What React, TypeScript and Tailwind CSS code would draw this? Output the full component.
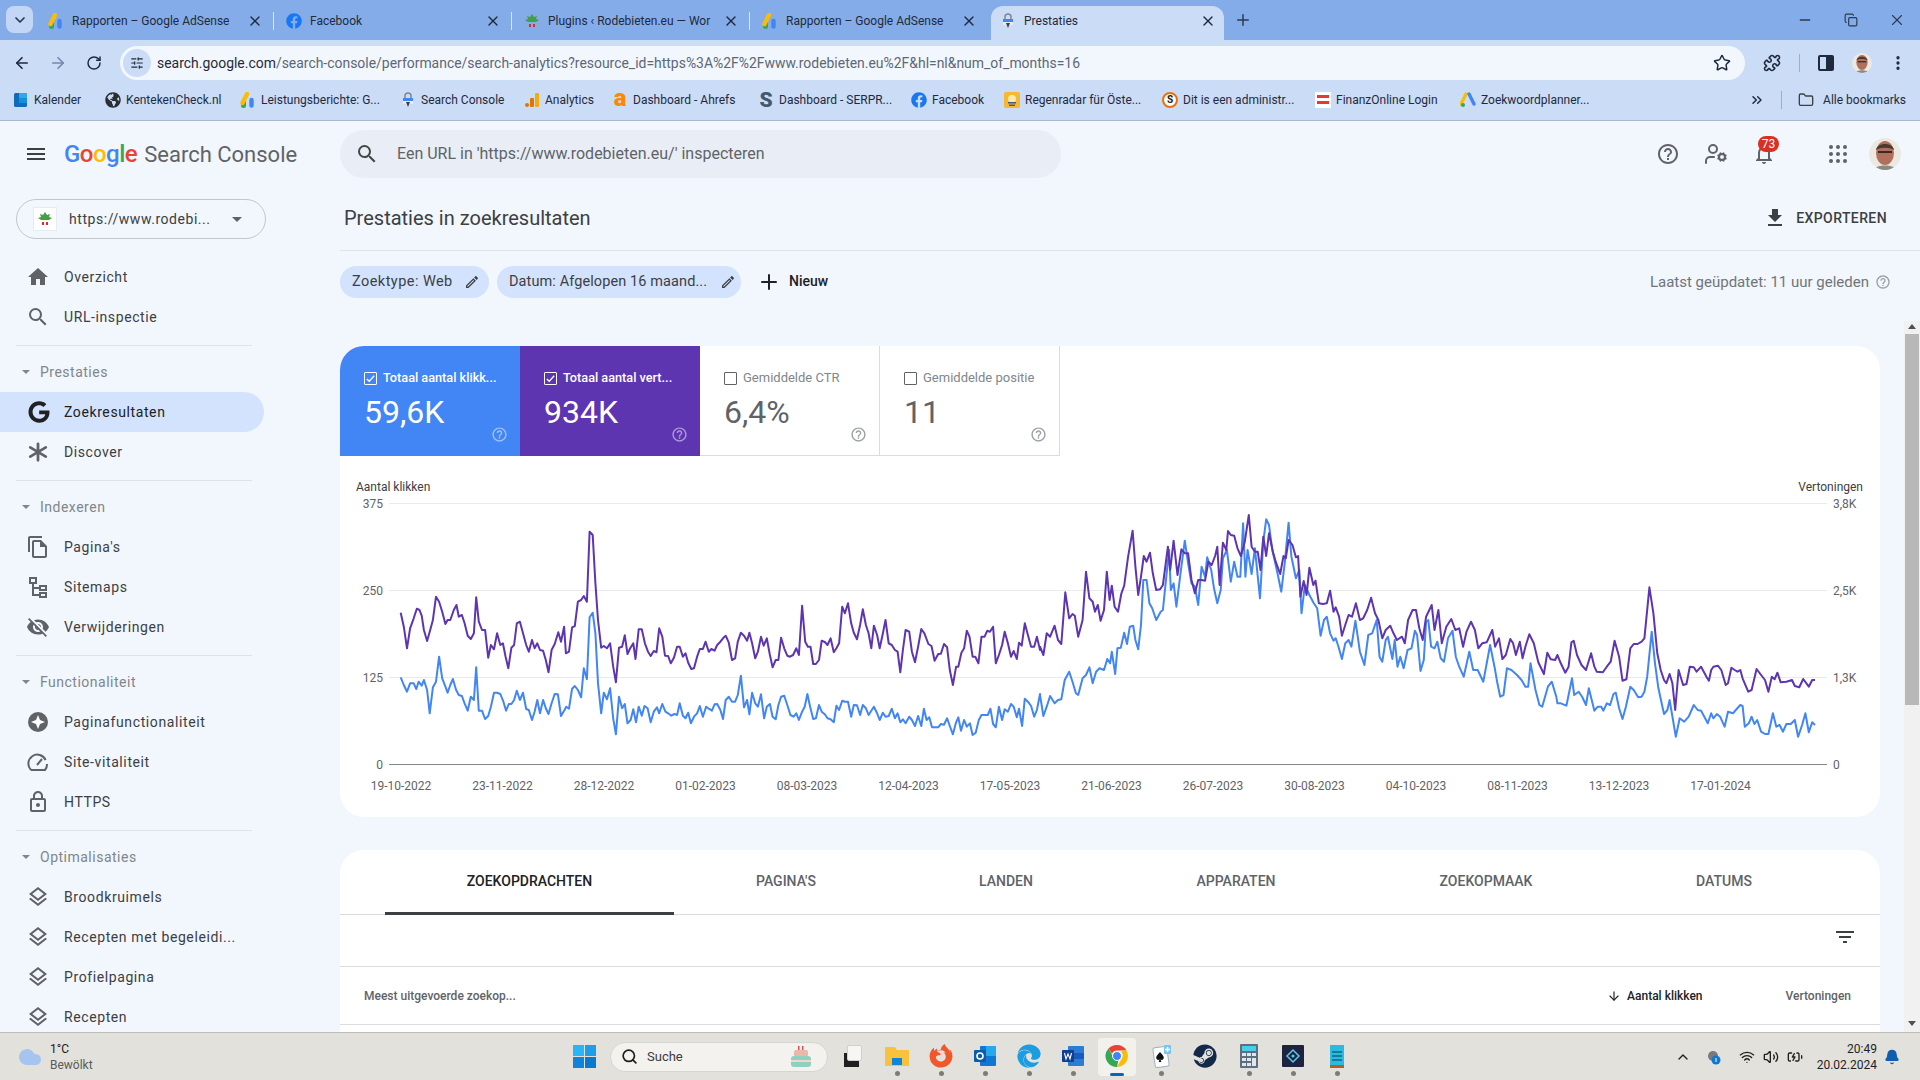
import React from 'react';
import { ArrowLeft, ArrowRight, RotateCw, Star, Puzzle, MoreVertical, SlidersHorizontal, X, Plus, ChevronDown, ChevronUp, Minus, Copy, ChevronsRight, Folder, UserCog, ArrowDown, Search, Wifi, Volume2, BatteryCharging, Bell, Cloud } from 'lucide-react';
import { FaFacebook, FaGoogle, FaFirefoxBrowser, FaEdge, FaSteam, FaGlobeAmericas } from 'react-icons/fa';

const paths = {
  home: 'M10 20v-6h4v6h5v-8h3L12 3 2 12h3v8z',
  search: 'M15.5 14h-.79l-.28-.27A6.471 6.471 0 0 0 16 9.5 6.5 6.5 0 1 0 9.5 16c1.61 0 3.09-.59 4.23-1.57l.27.28v.79l5 4.99L20.49 19l-4.99-5zm-6 0C7.01 14 5 11.99 5 9.5S7.01 5 9.5 5 14 7.01 14 9.5 11.99 14 9.5 14z',
  pages: 'M16 1H4c-1.1 0-2 .9-2 2v14h2V3h12V1zm-1 4H8c-1.1 0-1.99.9-1.99 2L6 21c0 1.1.89 2 1.99 2H19c1.1 0 2-.9 2-2V11l-6-6zM8 21V7h6v5h5v9H8z',
  visOff: 'M12 7c2.76 0 5 2.24 5 5 0 .65-.13 1.26-.36 1.83l2.92 2.92c1.51-1.26 2.7-2.89 3.43-4.75-1.73-4.39-6-7.5-11-7.5-1.4 0-2.74.25-3.98.7l2.16 2.16C10.74 7.13 11.35 7 12 7zM2 4.27l2.28 2.28.46.46C3.08 8.3 1.78 10.02 1 12c1.73 4.39 6 7.5 11 7.5 1.55 0 3.03-.3 4.38-.84l.42.42L19.73 22 21 20.73 3.27 3 2 4.27zM7.53 9.8l1.55 1.55c-.05.21-.08.43-.08.65 0 1.66 1.34 3 3 3 .22 0 .44-.03.65-.08l1.55 1.55c-.67.33-1.41.53-2.2.53-2.76 0-5-2.24-5-5 0-.79.2-1.53.53-2.2zm4.31-.78 3.15 3.15.02-.16c0-1.66-1.34-3-3-3l-.17.01z',
  lock: 'M18 8h-1V6c0-2.76-2.24-5-5-5S7 3.24 7 6v2H6c-1.1 0-2 .9-2 2v10c0 1.1.9 2 2 2h12c1.1 0 2-.9 2-2V10c0-1.1-.9-2-2-2zM9 6c0-1.66 1.34-3 3-3s3 1.34 3 3v2H9V6zm9 14H6V10h12v10zm-6-3c1.1 0 2-.9 2-2s-.9-2-2-2-2 .9-2 2 .9 2 2 2z',
  layers: 'M11.99 18.54l-7.37-5.73L3 14.07l9 7 9-7-1.63-1.27zM12 16l7.36-5.73L21 9l-9-7-9 7 1.63 1.27L12 16zm0-11.47L17.74 9 12 13.47 6.26 9 12 4.53z',
  help: 'M11 18h2v-2h-2v2zm1-16C6.48 2 2 6.48 2 12s4.48 10 10 10 10-4.48 10-10S17.52 2 12 2zm0 18c-4.41 0-8-3.59-8-8s3.59-8 8-8 8 3.59 8 8-3.59 8-8 8zm0-14c-2.21 0-4 1.79-4 4h2c0-1.1.9-2 2-2s2 .9 2 2c0 2-3 1.75-3 5h2c0-2.25 3-2.5 3-5 0-2.21-1.79-4-4-4z',
  bell: 'M12 22c1.1 0 2-.9 2-2h-4c0 1.1.9 2 2 2zm6-6v-5c0-3.07-1.63-5.64-4.5-6.32V4c0-.83-.67-1.5-1.5-1.5s-1.5.67-1.5 1.5v.68C7.64 5.36 6 7.92 6 11v5l-2 2v1h16v-1l-2-2zm-2 1H8v-6c0-2.48 1.51-4.5 4-4.5s4 2.02 4 4.5v6z',
  download: 'M19 9h-4V3H9v6H5l7 7 7-7zM5 18v2h14v-2H5z',
  edit: 'M14.06 9.02l.92.92L5.92 19H5v-.92l9.06-9.06M17.66 3c-.25 0-.51.1-.7.29l-1.83 1.83 3.75 3.75 1.83-1.83c.39-.39.39-1.02 0-1.41l-2.34-2.34c-.2-.2-.45-.29-.71-.29zm-3.6 3.19L3 17.25V21h3.75L17.81 9.94l-3.75-3.75z',
  filter: 'M10 18h4v-2h-4v2zM3 6v2h18V6H3zm3 7h12v-2H6v2z',
  menu: 'M3 18h18v-2H3v2zm0-5h18v-2H3v2zm0-7v2h18V6H3z',
};

const Mi = ({ d, className }: { d: string; className?: string }) => (
  <svg viewBox="0 0 24 24" fill="currentColor" className={className}><path d={d} /></svg>
);

// favicons
const AdSense = () => (
  <svg viewBox="0 0 16 16" className="w-4 h-4 shrink-0">
    <rect x="1" y="8" width="5" height="8" rx="2.5" fill="#34a853" />
    <path d="M2.5 11 L7 2" stroke="#fbbc04" strokeWidth="4.4" strokeLinecap="round" />
    <path d="M11.5 13.5 L11.5 8" stroke="#4285f4" strokeWidth="4.4" strokeLinecap="round" />
  </svg>
);
const Plant = () => (
  <svg viewBox="0 0 16 16" className="w-4 h-4 shrink-0">
    <path d="M8 1l2 3 3-1-1 3 3 1-3 2H4L1 7l3-1-1-3 3 1z" fill="#43a047" />
    <rect x="5" y="11" width="2" height="3" fill="#d32f2f" />
    <rect x="9" y="11" width="2" height="3" fill="#d32f2f" />
  </svg>
);
const ConsoleFav = () => (
  <svg viewBox="0 0 16 16" className="w-4 h-4 shrink-0">
    <path d="M5 6V4a3 3 0 016 0v2" fill="none" stroke="#80868b" strokeWidth="1.5" />
    <rect x="3" y="6" width="10" height="3" fill="#4285f4" />
    <rect x="3" y="9" width="10" height="3" fill="#e8eaed" />
    <path d="M6 10l2 5 2-5z" fill="#3c4043" />
  </svg>
);
const Fb = () => <FaFacebook className="w-4 h-4 shrink-0 text-[#1877f2]" />;

const tabs = [
  { icon: <AdSense />, label: 'Rapporten – Google AdSense', sep: true },
  { icon: <Fb />, label: 'Facebook', sep: true },
  { icon: <Plant />, label: 'Plugins ‹ Rodebieten.eu — Wor', sep: true },
  { icon: <AdSense />, label: 'Rapporten – Google AdSense', sep: false },
];

const bookmarks: { w: string; icon: React.ReactNode; label: string }[] = [
  { w: 'w-[92px]', label: 'Kalender', icon: <svg viewBox="0 0 16 16" className="w-4 h-4 shrink-0"><rect x="1" y="1" width="13" height="14" rx="1.5" fill="#0f6cbd" /><rect x="6" y="1" width="8" height="5" fill="#2fa8e8" /><rect x="6" y="6" width="8" height="5" fill="#1490df" /></svg> },
  { w: 'w-[135px]', label: 'KentekenCheck.nl', icon: <FaGlobeAmericas className="w-4 h-4 shrink-0 text-[#2b2f33]" /> },
  { w: 'w-[160px]', label: 'Leistungsberichte: G...', icon: <AdSense /> },
  { w: 'w-[124px]', label: 'Search Console', icon: <ConsoleFav /> },
  { w: 'w-[88px]', label: 'Analytics', icon: <svg viewBox="0 0 16 16" className="w-4 h-4 shrink-0"><rect x="11" y="1" width="4" height="14" rx="1" fill="#f9ab00" /><rect x="6" y="6" width="4" height="9" rx="1" fill="#e37400" /><circle cx="3" cy="13" r="2" fill="#e37400" /></svg> },
  { w: 'w-[146px]', label: 'Dashboard - Ahrefs', icon: <span className="w-4 h-4 shrink-0 flex items-center justify-center text-[24px] leading-none font-black text-[#ff8800] -mt-1">a</span> },
  { w: 'w-[153px]', label: 'Dashboard - SERPR...', icon: <span className="w-4 h-4 shrink-0 flex items-center justify-center text-[21px] leading-none font-black text-[#44596e]">S</span> },
  { w: 'w-[93px]', label: 'Facebook', icon: <Fb /> },
  { w: 'w-[158px]', label: 'Regenradar für Öste...', icon: <svg viewBox="0 0 16 16" className="w-4 h-4 shrink-0"><rect width="16" height="16" rx="2" fill="#f7b731" /><circle cx="8" cy="7" r="4" fill="#fde9a8" /><rect x="4" y="10" width="8" height="1.5" fill="#4a5a7a" /><rect x="5" y="12.5" width="6" height="1.5" fill="#4a5a7a" /></svg> },
  { w: 'w-[153px]', label: 'Dit is een administr...', icon: <span className="w-4 h-4 shrink-0 rounded-full border-2 border-[#e8710a] bg-white flex items-center justify-center text-[10px] leading-none font-bold text-[#202124]">S</span> },
  { w: 'w-[145px]', label: 'FinanzOnline Login', icon: <svg viewBox="0 0 16 16" className="w-4 h-4 shrink-0"><rect width="16" height="16" fill="#fff" /><rect x="2" y="3" width="12" height="3" fill="#e53935" /><rect x="2" y="9" width="12" height="3" fill="#e53935" /></svg> },
  { w: 'w-[130px]', label: 'Zoekwoordplanner...', icon: <svg viewBox="0 0 16 16" className="w-4 h-4 shrink-0"><path d="M6 2l-5 10" stroke="#fbbc04" strokeWidth="3.4" strokeLinecap="round" /><path d="M9 2l5 10" stroke="#4285f4" strokeWidth="3.4" strokeLinecap="round" /><circle cx="3" cy="13" r="2" fill="#34a853" /></svg> },
];

// sidebar icons that have no single material path handy
const Sitemap = () => (
  <svg viewBox="0 0 24 24" fill="none" stroke="currentColor" strokeWidth="2" className="w-6 h-6">
    <rect x="4" y="3" width="6" height="5" /><rect x="14" y="11" width="6" height="4" /><rect x="14" y="18" width="6" height="4" />
    <path d="M7 8v12h7M7 13h7" />
  </svg>
);
const Spark = () => (
  <svg viewBox="0 0 24 24" className="w-[22px] h-[22px]" stroke="currentColor" strokeWidth="3" strokeLinecap="round"><path d="M12 3v18M3.5 7l17 10M3.5 17l17-10" /></svg>
);
const Experience = () => (
  <svg viewBox="0 0 24 24" className="w-6 h-6"><circle cx="12" cy="12" r="10" fill="currentColor" /><path d="M12 5l2 5 5 2-5 2-2 5-2-5-5-2 5-2z" fill="#fff" /></svg>
);
const Speed = () => (
  <svg viewBox="0 0 24 24" fill="none" stroke="currentColor" strokeWidth="2" className="w-6 h-6"><path d="M5 20a9 9 0 1 1 14.6-10M21 14a9 9 0 0 1-2 6H5" /><path d="M11 15l5-6" /></svg>
);
const LayersIcon = () => <Mi d={paths.layers} className="w-6 h-6" />;

const sections: { title?: string; items: { label: string; icon: React.ReactNode; active?: boolean }[] }[] = [
  { items: [
    { label: 'Overzicht', icon: <Mi d={paths.home} className="w-6 h-6" /> },
    { label: 'URL-inspectie', icon: <Mi d={paths.search} className="w-6 h-6" /> },
  ] },
  { title: 'Prestaties', items: [
    { label: 'Zoekresultaten', active: true, icon: <FaGoogle className="w-[22px] h-[22px] text-[#202124] ml-px" /> },
    { label: 'Discover', icon: <Spark /> },
  ] },
  { title: 'Indexeren', items: [
    { label: "Pagina's", icon: <Mi d={paths.pages} className="w-6 h-6" /> },
    { label: 'Sitemaps', icon: <Sitemap /> },
    { label: 'Verwijderingen', icon: <Mi d={paths.visOff} className="w-6 h-6" /> },
  ] },
  { title: 'Functionaliteit', items: [
    { label: 'Paginafunctionaliteit', icon: <Experience /> },
    { label: 'Site-vitaliteit', icon: <Speed /> },
    { label: 'HTTPS', icon: <Mi d={paths.lock} className="w-6 h-6" /> },
  ] },
  { title: 'Optimalisaties', items: [
    { label: 'Broodkruimels', icon: <LayersIcon /> },
    { label: 'Recepten met begeleidi...', icon: <LayersIcon /> },
    { label: 'Profielpagina', icon: <LayersIcon /> },
    { label: 'Recepten', icon: <LayersIcon /> },
  ] },
];

const Sidebar = () => (
  <aside className="w-[340px] shrink-0 flex flex-col overflow-hidden">
    <div className="h-[65px] shrink-0 flex items-center pl-6">
      <Mi d={paths.menu} className="w-6 h-6 text-[#3c4043]" />
      <div className="ml-4 flex items-baseline whitespace-nowrap">
        <span className="text-[24px] leading-none tracking-[-0.5px] font-medium">
          <span className="text-[#4285f4]">G</span><span className="text-[#ea4335]">o</span><span className="text-[#fbbc04]">o</span><span className="text-[#4285f4]">g</span><span className="text-[#34a853]">l</span><span className="text-[#ea4335]">e</span>
        </span>
        <span className="ml-[7px] text-[22px] leading-none text-[#5f6368]">Search Console</span>
      </div>
    </div>
    <div className="mt-[13px] ml-4 w-[250px] h-10 shrink-0 rounded-full border border-[#c4c7c5] flex items-center pl-4 pr-[23px]">
      <span className="w-6 h-6 bg-white border border-[#e8eaed] flex items-center justify-center shrink-0"><Plant /></span>
      <span className="ml-3 pt-px text-[14px] tracking-[0.55px] text-[#3c4043] whitespace-nowrap">https://www.rodebi...</span>
      <span className="ml-auto w-0 h-0 border-x-[5px] border-x-transparent border-t-[5px] border-t-[#5f6368]" />
    </div>
    <nav className="mt-[18px] flex flex-col">
      {sections.map((s, i) => (
        <div key={i} className="flex flex-col">
          {s.title && (
            <div className="h-10 flex items-center">
              <span className="ml-[22px] w-0 h-0 border-x-[4px] border-x-transparent border-t-[4px] border-t-[#80868b]" />
              <span className="ml-[10px] text-[14px] tracking-[0.5px] text-[#80868b]">{s.title}</span>
            </div>
          )}
          {s.items.map((it) => (
            <div key={it.label + i} className={`h-10 w-[264px] shrink-0 flex items-center pl-[26px] gap-[14px] rounded-r-full ${it.active ? 'bg-[#d3e3fd]' : ''}`}>
              <span className={`w-6 h-6 flex items-center justify-center ${it.active ? 'text-[#202124]' : 'text-[#5f6368]'}`}>{it.icon}</span>
              <span className={`text-[14px] tracking-[0.6px] whitespace-nowrap ${it.active ? 'text-[#202124]' : 'text-[#3c4043]'}`}>{it.label}</span>
            </div>
          ))}
          {i < sections.length - 1 && <div className="mt-2 mb-[6px] ml-4 w-[236px] h-px bg-[#dfe3e8]" />}
        </div>
      ))}
    </nav>
  </aside>
);

const stats = [
  { label: 'Totaal aantal klikk...', value: '59,6K', bg: 'bg-[#4285f4]', on: true },
  { label: 'Totaal aantal vert...', value: '934K', bg: 'bg-[#5e35b1]', on: true },
  { label: 'Gemiddelde CTR', value: '6,4%', bg: 'bg-white', on: false },
  { label: 'Gemiddelde positie', value: '11', bg: 'bg-white', on: false },
];

const StatCard = ({ label, value, bg, on }: { label: string; value: string; bg: string; on: boolean }) => (
  <div className={`w-[180px] h-[110px] flex flex-col pl-6 pr-[12px] pt-[25px] ${bg} ${on ? 'text-white' : 'text-[#80868b] border-r border-b border-[#dadce0]'}`}>
    <div className="flex items-center h-[14px]">
      <span className={`w-[13px] h-[13px] border rounded-[1px] flex items-center justify-center shrink-0 ${on ? 'border-white' : 'border-[#5f6368]'}`}>
        {on && <svg viewBox="0 0 12 12" className="w-[11px] h-[11px]"><path d="M2 6.5l2.6 2.6L10 3" fill="none" stroke="#fff" strokeWidth="1.5" /></svg>}
      </span>
      <span className={`ml-[6px] whitespace-nowrap ${on ? 'text-[12.7px] font-medium' : 'text-[13px]'}`}>{label}</span>
    </div>
    <div className={`mt-[11px] text-[32px] leading-[32px] ${on ? '' : 'text-[#5f6368]'}`}>{value}</div>
    <Mi d={paths.help} className={`w-[17px] h-[17px] self-end -mt-[2px] ${on ? 'text-white/50' : 'text-[#9aa0a6]'}`} />
  </div>
);

// series read off the reference, in two runs with their own x factor
const z6p = [136,428,143,470,150,535,157,475,165,445,172,416,178,420,183,437,188,480,195,513,202,480,208,450,215,380,222,395,229,425,236,462,241,450,247,450,255,420,261,405,266,440,273,435,279,460,286,497,293,507,300,490,305,382,311,455,318,480,325,480,332,563,338,525,345,538,352,490,359,525,365,520,371,560,377,595,384,533,390,525,396,460,403,455,410,490,417,525,423,545,430,510,436,535,442,520,448,540,455,542,461,570,467,607,474,540,481,522,489,487,495,515,502,470,506,550,513,545,520,472,526,468,533,395,540,390,546,378,553,395,559,185,566,195,572,340,578,450,585,533,591,528,598,535,605,520,612,590,618,637,625,533,632,530,638,496,644,552,650,535,657,520,662,567,669,478,676,478,683,520,690,545,696,558,703,543,709,547,715,475,722,500,728,557,735,558,741,580,748,563,755,530,761,530,768,560,774,550,780,578,787,597,793,595,800,560,806,537,813,537,819,515,826,545,832,537,839,542,845,525,852,515,858,505,864,497,871,518,878,570,885,565,891,515,898,488,905,497,912,512,917,488,923,520,930,565,936,545,943,500,949,527,956,505,963,555,969,592,976,570,982,570,988,503,995,535,1002,557,1008,560,1015,555,1022,535,1028,555,1035,407,1042,515,1048,530,1054,530,1060,582,1066,582,1073,570,1079,512,1086,516,1092,525,1099,505,1106,547,1112,535,1118,520,1125,410,1131,430,1138,400,1145,460,1151,488,1158,508,1165,465,1171,418,1178,465,1184,490,1190,535,1196,467,1203,495,1209,535,1216,490,1222,450,1229,520,1236,525,1243,540,1249,545,1255,607,1261,540,1267,480,1275,485,1281,545,1288,577,1295,530,1302,477,1309,490,1318,522,1325,528,1332,572,1340,552,1346,551,1353,522,1360,532,1366,600,1373,645,1380,590,1385,590,1392,548,1398,535,1404,482,1410,500,1417,560,1423,560,1430,580,1437,500,1444,500,1450,482,1456,485,1463,470,1469,580,1476,555,1483,525,1489,485,1496,520,1503,560,1509,543,1516,567,1521,518,1527,527,1534,460,1541,495,1548,530,1555,530,1561,500,1568,540];
const z7p = [0,530,6,555,12,490,18,500,26,467,32,510,38,522,45,367,52,445,58,432,62,437,68,500,76,450,82,305,88,385,94,395,98,425,103,405,108,452,114,420,119,305,124,390,128,347,133,410,139,425,145,370,150,347,157,260,165,182,170,290,175,375,180,320,185,258,190,275,196,248,201,310,207,360,214,358,219,345,228,230,232,300,238,212,245,315,252,238,258,250,264,250,270,330,276,370,282,330,288,330,294,332,300,275,306,285,312,258,316,230,320,345,326,218,332,240,335,183,340,195,346,197,352,235,358,258,365,215,372,135,377,230,383,245,388,245,393,300,398,200,403,258,408,190,415,245,420,275,428,312,434,258,438,265,443,210,450,225,456,262,460,258,464,380,470,333,475,375,480,293,487,345,491,332,497,400,504,402,511,400,517,362,523,425,527,412,533,440,538,497,545,460,550,435,556,440,563,400,570,450,576,445,583,420,590,383,597,430,603,450,610,505,616,480,624,467,630,490,636,510,645,500,650,520,656,450,664,420,670,420,676,475,682,510,688,440,698,405,703,480,710,420,716,520,724,470,733,447,740,480,747,475,754,530,760,485,768,455,775,480,781,535,788,520,796,517,806,480,811,530,818,505,824,567,830,555,838,507,843,520,848,555,855,515,860,565,865,530,872,493,880,520,888,577,898,612,904,548,910,568,918,570,922,555,928,580,936,608,942,590,947,517,951,512,957,555,965,585,973,600,982,550,988,590,992,605,1003,607,1010,590,1017,575,1024,512,1032,560,1038,632,1045,628,1052,535,1058,522,1065,522,1072,515,1077,505,1086,352,1093,430,1100,550,1106,600,1112,630,1116,640,1122,612,1127,640,1132,720,1138,600,1146,645,1152,642,1158,590,1165,592,1170,605,1178,590,1188,622,1192,632,1196,600,1200,590,1208,587,1214,600,1222,645,1226,640,1232,593,1238,600,1243,605,1248,600,1252,625,1262,665,1268,660,1277,597,1285,615,1292,630,1298,665,1304,620,1309,628,1314,608,1320,637,1330,635,1340,630,1345,648,1353,652,1360,627,1370,650,1376,630,1381,630];
const z6b = [136,622,143,645,150,665,157,640,165,640,171,657,176,635,183,647,188,630,195,660,201,730,208,652,215,635,222,560,229,625,236,650,241,668,247,645,253,627,260,660,266,675,273,678,279,700,286,722,293,680,300,690,305,592,311,722,318,722,325,747,332,738,338,710,345,668,352,668,359,672,366,695,372,722,378,702,384,702,390,690,396,662,403,690,410,668,417,717,423,720,430,750,436,725,442,690,448,730,455,690,461,715,467,732,474,700,481,672,488,673,495,738,502,722,507,710,513,716,520,656,526,648,533,660,540,682,546,595,553,628,559,442,566,428,572,490,578,640,585,730,591,668,598,688,605,655,612,745,618,793,625,680,632,715,638,702,644,760,651,750,657,718,663,757,669,710,676,737,682,708,689,715,696,757,703,725,710,712,715,730,722,702,729,725,735,730,742,737,749,732,755,735,761,700,768,737,774,745,780,728,786,760,793,740,800,730,806,708,813,740,820,710,826,716,833,722,839,703,845,702,852,720,858,747,864,690,871,680,878,695,885,695,891,675,898,617,905,712,912,690,917,733,923,668,930,700,936,710,943,673,950,745,956,710,963,702,969,740,976,748,982,705,988,680,995,677,1002,705,1009,735,1016,740,1022,730,1028,750,1035,725,1041,710,1047,672,1053,710,1060,747,1066,745,1073,705,1079,725,1086,733,1092,745,1099,748,1106,757,1112,707,1118,720,1125,692,1131,695,1138,695,1145,740,1151,705,1158,706,1165,735,1171,705,1178,715,1184,735,1190,722,1196,710,1203,730,1209,750,1216,728,1222,740,1229,738,1236,716,1243,745,1249,730,1255,757,1261,748,1267,760,1275,740,1281,750,1288,768,1295,738,1302,768,1308,716,1314,750,1320,742,1326,772,1333,772,1340,772,1346,762,1353,764,1360,745,1366,768,1373,793,1380,757,1385,742,1391,782,1398,750,1404,770,1411,760,1417,795,1424,788,1431,750,1437,735,1444,735,1451,735,1457,716,1463,762,1469,772,1476,710,1483,750,1489,718,1496,725,1503,702,1509,710,1516,742,1521,716,1528,768,1534,686,1541,695,1548,708,1555,740,1561,720,1568,672];
const z7b = [0,675,6,738,12,710,18,678,26,700,32,690,38,688,44,630,52,605,58,635,64,670,68,675,76,625,82,615,88,592,94,640,100,605,106,595,114,600,120,567,125,580,128,545,134,612,138,535,144,533,150,488,155,522,160,470,166,467,170,510,175,538,180,465,184,330,190,330,195,400,200,415,207,450,215,425,219,420,225,320,230,240,233,360,238,340,243,410,250,315,258,212,264,280,270,340,276,350,282,405,288,290,294,320,298,262,305,300,310,355,316,400,322,360,326,265,333,240,340,335,346,275,352,320,357,320,362,160,366,320,370,240,377,312,383,235,392,385,398,215,403,148,408,165,414,240,422,300,430,365,436,280,443,158,448,260,456,325,462,300,466,430,472,345,480,375,488,400,494,415,500,497,506,450,511,440,517,490,523,512,527,505,532,530,538,567,544,520,550,510,555,530,562,452,570,545,578,585,585,495,592,490,600,450,605,560,610,575,616,510,620,500,628,567,632,510,637,590,642,560,648,595,655,540,662,535,668,482,672,495,678,603,684,570,688,455,692,450,697,530,703,535,708,515,714,565,720,575,727,505,735,482,741,560,747,590,755,620,765,545,772,600,780,600,790,635,802,525,810,590,815,640,820,680,826,675,832,595,840,600,850,615,858,630,865,650,870,650,874,580,883,660,890,705,895,710,905,650,912,635,920,680,922,700,928,700,938,707,948,625,952,675,960,665,966,680,973,705,978,655,988,722,994,710,1000,710,1004,722,1010,700,1016,705,1022,672,1026,668,1032,715,1038,747,1044,710,1052,650,1058,660,1066,682,1072,680,1077,665,1082,620,1090,485,1096,580,1102,655,1112,732,1118,720,1122,690,1128,750,1133,800,1140,745,1148,755,1156,740,1165,705,1172,720,1178,722,1190,760,1196,730,1200,745,1206,732,1212,740,1220,770,1226,725,1235,730,1240,720,1248,705,1252,708,1256,770,1263,760,1268,740,1273,762,1278,750,1285,785,1292,792,1298,792,1306,730,1312,770,1318,765,1324,785,1330,762,1338,762,1345,750,1351,800,1358,765,1364,730,1370,787,1376,757,1381,765];

const toPoints = (a: number[], x0: number, fx: number) => {
  const out: string[] = [];
  for (let i = 0; i < a.length; i += 2) out.push(`${(x0 + a[i] / fx).toFixed(1)},${(470 + a[i + 1] / 3).toFixed(1)}`);
  return out.join(' ');
};
const seriesPoints = (a: number[], b: number[]) => toPoints(a, 340, 2.24) + ' ' + toPoints(b, 1040, 1.782);

const dates = ['19-10-2022','23-11-2022','28-12-2022','01-02-2023','08-03-2023','12-04-2023','17-05-2023','21-06-2023','26-07-2023','30-08-2023','04-10-2023','08-11-2023','13-12-2023','17-01-2024'];
const grid = [{ y: 503, l: '375', r: '3,8K' }, { y: 590, l: '250', r: '2,5K' }, { y: 677, l: '125', r: '1,3K' }, { y: 764, l: '0', r: '0' }];

const Chart = () => (
  <svg viewBox="340 456 1540 361" className="block w-[1540px] h-[361px]" fontFamily="Roboto, sans-serif" fontSize="12">
    <text x="356" y="491" fill="#3c4043">Aantal klikken</text>
    <text x="1863" y="491" fill="#3c4043" textAnchor="end">Vertoningen</text>
    {grid.map((g) => (
      <g key={g.y}>
        <line x1="389" x2="1827" y1={g.y + 0.5} y2={g.y + 0.5} stroke={g.l === '0' ? '#80868b' : '#e8eaed'} />
        <text x="383" y={g.y + 5} textAnchor="end" fill="#5f6368">{g.l}</text>
        <text x="1833" y={g.y + 5} fill="#5f6368">{g.r}</text>
      </g>
    ))}
    {dates.map((d, i) => (
      <text key={d} x={401 + i * 101.5} y="790" textAnchor="middle" fill="#5f6368">{d}</text>
    ))}
    <polyline points={seriesPoints(z6b, z7b)} fill="none" stroke="#4285f4" strokeWidth="2" strokeLinejoin="round" />
    <polyline points={seriesPoints(z6p, z7p)} fill="none" stroke="#5e35b1" strokeWidth="2" strokeLinejoin="round" />
  </svg>
);

const tableTabs = [
  { label: 'ZOEKOPDRACHTEN', w: 'w-[289px]', on: true },
  { label: "PAGINA'S", w: 'w-[224px]' },
  { label: 'LANDEN', w: 'w-[216px]' },
  { label: 'APPARATEN', w: 'w-[244px]' },
  { label: 'ZOEKOPMAAK', w: 'w-[256px]' },
  { label: 'DATUMS', w: 'w-[220px]' },
];

const Avatar = ({ size, className = '' }: { size: string; className?: string }) => (
  <svg viewBox="0 0 32 32" className={`${size} rounded-full shrink-0 ${className}`}>
    <rect width="32" height="32" fill="#ece8e2" />
    <ellipse cx="16" cy="15" rx="9" ry="12" fill="#b0705c" />
    <path d="M7 12c1-8 17-8 18 0-4-3-14-3-18 0z" fill="#4a3a30" />
    <rect x="9" y="13" width="14" height="2" fill="#3a2a25" />
    <path d="M4 32c2-6 22-6 24 0z" fill="#8a8a80" />
  </svg>
);

const Main = () => (
  <main className="relative flex-1 min-w-0 flex flex-col overflow-hidden">
    <div className="h-[65px] shrink-0 flex items-center">
      <div className="w-[721px] h-12 rounded-full bg-[#e9eef6] flex items-center pl-[15px] text-[#444746]">
        <Mi d={paths.search} className="w-6 h-6" />
        <span className="ml-[18px] text-[16px] text-[#5f6368]">Een URL in 'https://www.rodebieten.eu/' inspecteren</span>
      </div>
      <div className="ml-auto pr-[19px] flex items-center text-[#5f6368]">
        <span className="w-12 h-12 flex items-center justify-center"><Mi d={paths.help} className="w-6 h-6" /></span>
        <span className="w-12 h-12 flex items-center justify-center"><UserCog className="w-6 h-6" strokeWidth={2} /></span>
        <span className="relative w-12 h-12 flex items-center justify-center">
          <Mi d={paths.bell} className="w-6 h-6" />
          <span className="absolute left-[18px] top-[6px] w-[21px] h-4 rounded-full bg-[#d93025] text-white text-[12px] leading-4 text-center">73</span>
        </span>
        <span className="ml-[26px] w-12 h-12 flex items-center justify-center">
          <svg viewBox="0 0 24 24" className="w-6 h-6" fill="currentColor">
            {[5, 12, 19].flatMap((y) => [5, 12, 19].map((x) => <circle key={`${x}-${y}`} cx={x} cy={y} r="2" />))}
          </svg>
        </span>
        <Avatar size="w-8 h-8" className="ml-[7px]" />
      </div>
    </div>

    <div className="h-[65px] shrink-0 flex items-center justify-between border-b border-[#dfe3e8] pl-1 pr-[33px]">
      <h1 className="text-[20px] text-[#3c4043]">Prestaties in zoekresultaten</h1>
      <div className="flex items-center gap-[9px] text-[#3c4043]">
        <Mi d={paths.download} className="w-6 h-6" />
        <span className="text-[14px] font-medium tracking-[0.4px]">EXPORTEREN</span>
      </div>
    </div>

    <div className="h-[95px] shrink-0 flex items-start pt-[15px] pr-[29px]">
      <div className="w-[149px] h-8 rounded-full bg-[#d3e3fd] flex items-center justify-between pl-3 pr-[9px] text-[14.5px] tracking-[0.45px] text-[#3c4043]">
        <span>Zoektype: Web</span>
        <Mi d={paths.edit} className="w-4 h-4" />
      </div>
      <div className="ml-2 w-[244px] h-8 rounded-full bg-[#d3e3fd] flex items-center justify-between pl-3 pr-[5px] text-[14.5px] tracking-[0.1px] text-[#3c4043]">
        <span className="whitespace-nowrap">Datum: Afgelopen 16 maand...</span>
        <Mi d={paths.edit} className="w-4 h-4" />
      </div>
      <div className="ml-4 h-8 flex items-center gap-2 text-[14px] font-medium text-[#202124]">
        <Plus className="w-6 h-6" strokeWidth={2} />
        <span className="-mt-[2px]">Nieuw</span>
      </div>
      <div className="ml-auto h-8 flex items-center gap-[6px] text-[15px] text-[#70757a]">
        <span>Laatst geüpdatet: 11 uur geleden</span>
        <Mi d={paths.help} className="w-4 h-4 text-[#9aa0a6]" />
      </div>
    </div>

    <section className="mr-10 h-[471px] shrink-0 bg-white rounded-3xl overflow-hidden">
      <div className="flex">
        {stats.map((s) => <StatCard key={s.label} {...s} />)}
      </div>
      <Chart />
    </section>

    <section className="mt-[33px] mr-10 flex-1 min-h-0 bg-white rounded-t-3xl flex flex-col">
      <div className="h-[65px] shrink-0 flex pl-[45px] border-b border-[#dadce0]">
        {tableTabs.map((t) => (
          <div key={t.label} className={`${t.w} h-[65px] flex items-center justify-center text-[14px] font-medium ${t.on ? 'text-[#202124] border-b-[3px] border-[#3c4043]' : 'text-[#5f6368] pb-[3px]'}`}>{t.label}</div>
        ))}
      </div>
      <div className="h-[52px] shrink-0 flex justify-end items-start pt-[10px] pr-[23px] border-b border-[#dadce0]">
        <Mi d={paths.filter} className="w-6 h-6 text-[#3c4043]" />
      </div>
      <div className="h-[58px] shrink-0 flex items-center pl-6 pr-[29px] border-b border-[#dadce0] text-[12px] font-medium">
        <span className="text-[#5f6368]">Meest uitgevoerde zoekop...</span>
        <ArrowDown className="ml-auto w-[14px] h-[14px] text-[#202124]" />
        <span className="ml-[6px] text-[#202124]">Aantal klikken</span>
        <span className="ml-[83px] text-[#5f6368]">Vertoningen</span>
      </div>
    </section>

    <div className="absolute right-0 top-[200px] bottom-0 w-4 bg-[#f1f1f1] flex flex-col items-center">
      <span className="mt-[3px] w-0 h-0 border-x-[4px] border-x-transparent border-b-[5px] border-b-[#505050]" />
      <span className="mt-[5px] w-[14px] h-[371px] bg-[#b8b8b8]" />
      <span className="mt-auto mb-[6px] w-0 h-0 border-x-[4px] border-x-transparent border-t-[5px] border-t-[#505050]" />
    </div>
  </main>
);

const Slot = ({ children, dot, active }: { children: React.ReactNode; dot?: boolean; active?: boolean }) => (
  <div className="relative w-11 h-12 flex items-center justify-center">
    {active && <span className="absolute left-[3px] top-[5px] w-[38px] h-[38px] rounded bg-[#f2f1ec]" />}
    <span className="relative w-6 h-6 flex items-center justify-center -mt-[1px]">{children}</span>
    {dot && <span className="absolute left-[20px] bottom-[5px] w-[5px] h-[5px] rounded-full bg-[#7c7c78]" />}
    {active && <span className="absolute left-[15px] bottom-[5px] w-[14px] h-[3px] rounded-full bg-[#0067c0]" />}
  </div>
);

const Taskbar = () => (
  <footer className="h-12 shrink-0 flex items-center bg-[#e2e1dc] border-t border-[#bdbdb8]">
    <div className="w-[573px] shrink-0 flex items-center pl-[18px]">
      <Cloud className="w-6 h-6 text-[#a6c5ee]" fill="#a6c5ee" />
      <div className="ml-2 flex flex-col text-[12px] leading-[16px]">
        <span className="text-[#202020]">1°C</span>
        <span className="text-[#5a5a5a]">Bewölkt</span>
      </div>
    </div>
    <svg viewBox="0 0 23 23" className="w-[23px] h-[23px] shrink-0">
      <rect width="11" height="11" fill="#29b6f6" /><rect x="12" width="11" height="11" fill="#1e9de8" /><rect y="12" width="11" height="11" fill="#0f85d9" /><rect x="12" y="12" width="11" height="11" fill="#0a78cc" />
    </svg>
    <div className="ml-[14px] w-[218px] h-[30px] rounded-full bg-[#f3f2ee] border border-[#d6d5cf] flex items-center pl-[10px] pr-[12px]">
      <Search className="w-[17px] h-[17px] text-[#1f1f1f]" strokeWidth={2.4} />
      <span className="ml-[9px] text-[13px] text-[#3c3c3c]">Suche</span>
      <svg viewBox="0 0 28 28" className="ml-auto w-7 h-7">
        <rect x="11" y="3" width="1.5" height="5" fill="#d9534f" /><rect x="15" y="3" width="1.5" height="5" fill="#d9534f" />
        <rect x="7" y="7" width="14" height="7" rx="2" fill="#e8b9a8" /><rect x="4" y="13" width="20" height="11" rx="3" fill="#8fd0c0" /><rect x="4" y="17" width="20" height="2" fill="#f2d7c8" />
      </svg>
    </div>
    <div className="ml-[3px] flex">
      <Slot><span className="relative w-[18px] h-[22px]"><span className="absolute left-0 bottom-0 w-[15px] h-[14px] bg-[#1f1f1f]" /><span className="absolute right-0 top-0 w-[15px] h-[16px] bg-[#f6f6f4] border border-[#d0d0cc] rounded-[2px]" /></span></Slot>
      <Slot dot><svg viewBox="0 0 24 24" className="w-6 h-6"><path d="M0 3h10l2 3h12v16H0z" fill="#f9c23c" /><rect x="7" y="14" width="10" height="7" fill="#0f85d9" /></svg></Slot>
      <Slot dot><FaFirefoxBrowser className="w-6 h-6 text-[#f2572c]" /></Slot>
      <Slot dot><svg viewBox="0 0 24 24" className="w-6 h-6"><rect x="7" y="2" width="16" height="20" rx="1" fill="#0f78d4" /><rect x="13" y="2" width="10" height="10" fill="#28a8ea" /><rect x="1" y="6" width="12" height="12" rx="1" fill="#0b5cab" /><circle cx="7" cy="12" r="3" fill="none" stroke="#fff" strokeWidth="1.6" /></svg></Slot>
      <Slot dot><FaEdge className="w-6 h-6 text-[#1b9de2]" /></Slot>
      <Slot dot><svg viewBox="0 0 24 24" className="w-6 h-6"><rect x="7" y="2" width="16" height="20" rx="1" fill="#2b7cd3" /><rect x="7" y="9" width="16" height="6" fill="#185abd" /><rect x="1" y="6" width="12" height="12" rx="1" fill="#103f91" /><path d="M3.5 9l1.5 6 2-5 2 5 1.5-6" fill="none" stroke="#fff" strokeWidth="1.1" /></svg></Slot>
      <Slot active>
        <svg viewBox="0 0 24 24" className="w-6 h-6">
          <path d="M12 1a11 11 0 019.5 5.5H12a5.5 5.5 0 00-5 3.2L3.5 4.5A11 11 0 0112 1z" fill="#ea4335" />
          <path d="M21.5 6.5A11 11 0 0112 23l4.7-8.2A5.5 5.5 0 0017 9a5 5 0 00-1-2.5z" fill="#fbbc04" />
          <path d="M12 23A11 11 0 013.5 4.5L8 12.5a5.5 5.5 0 005.5 3z" fill="#34a853" />
          <circle cx="12" cy="12" r="4.5" fill="#4285f4" stroke="#fff" strokeWidth="1" />
        </svg>
      </Slot>
      <Slot dot><svg viewBox="0 0 24 24" className="w-6 h-6"><rect x="5" y="3" width="14" height="20" rx="2" fill="#fff" stroke="#9fb0c4" transform="rotate(-8 12 13)" /><path d="M11 8c3 3.5 5 5 3 7.500-1 .8-2 .4-2.500-.2l.8 2.700H9.700l.8-2.700c-.5.6-1.500 1-2.500.2-2-2.500 0-4 3-7.500z" fill="#111" /><rect x="15" y="1" width="7" height="9" rx="1" fill="#7cc4f0" /><path d="M18.500 3v5M16 5.500h5" stroke="#fff" strokeWidth="1.5" /></svg></Slot>
      <Slot><FaSteam className="w-6 h-6 text-[#12294a]" /></Slot>
      <Slot dot><svg viewBox="0 0 24 24" className="w-6 h-6"><rect x="3" y="0" width="18" height="24" rx="1" fill="#5f6f7f" /><rect x="5" y="2" width="14" height="5" fill="#45d0e8" /><path d="M5 9h4v3H5zm5 0h4v3h-4zm5 0h4v3h-4zM5 14h4v3H5zm5 0h4v3h-4zm5 0h4v8h-4zM5 19h4v3H5zm5 0h4v3h-4z" fill="#dfe6ec" /></svg></Slot>
      <Slot dot><svg viewBox="0 0 24 24" className="w-6 h-6"><rect x="1" y="1" width="22" height="22" rx="1" fill="#1e2340" /><path d="M12 6l6 6-6 6-6-6z" fill="none" stroke="#5cc6e8" strokeWidth="1.5" /><circle cx="12" cy="12" r="1.6" fill="#5cc6e8" /></svg></Slot>
      <Slot dot><svg viewBox="0 0 24 24" className="w-6 h-6"><rect x="5" y="1" width="14" height="20" fill="#2bbbe0" /><path d="M7 7h10v2H7zm0 4h10v2H7zm0 4h10v2H7z" fill="#137a9c" /><rect x="5" y="21" width="14" height="3" fill="#b45f1e" /></svg></Slot>
    </div>
    <div className="ml-auto pr-5 flex items-center text-[#1f1f1f]">
      <ChevronUp className="w-4 h-4" />
      <svg viewBox="0 0 16 16" className="ml-[15px] w-4 h-4"><circle cx="7" cy="7" r="5" fill="#7a7a78" /><circle cx="10" cy="11" r="4.5" fill="#0f78d4" /><rect x="9.5" y="9" width="1" height="4" fill="#fff" /></svg>
      <Wifi className="ml-[17px] w-4 h-4" />
      <Volume2 className="ml-2 w-4 h-4" />
      <BatteryCharging className="ml-2 w-4 h-4" />
      <div className="ml-4 w-[58px] flex flex-col items-end text-[12px] leading-[16px] whitespace-nowrap">
        <span>20:49</span><span>20.02.2024</span>
      </div>
      <Bell className="ml-[7px] w-4 h-4 text-[#0f5fb0]" fill="#0f5fb0" />
    </div>
  </footer>
);

export default function App() {
  return (
    <div className="h-screen w-screen flex flex-col overflow-hidden bg-[#f2f6fd] font-[family-name:Roboto,sans-serif]">
      <div className="h-10 shrink-0 flex bg-[#84ace9] text-[#2b3a52]">
        <div className="ml-[6px] mt-[6px] mr-[3px] w-[27px] h-[27px] rounded-lg bg-[#c3d6f6] flex items-center justify-center">
          <ChevronDown className="w-4 h-4" strokeWidth={2.6} />
        </div>
        {tabs.map((t, i) => (
          <div key={i} className="w-[238px] h-[34px] mt-[6px] pb-1 flex items-center pl-3 text-[12px] text-[#1f2a3c]">
            {t.icon}
            <span className="ml-2 flex-1 overflow-hidden whitespace-nowrap">{t.label}</span>
            <X className="ml-2 w-4 h-4" strokeWidth={2} />
            <span className={`ml-[10px] w-px h-[18px] ${t.sep ? 'bg-[#dbe6f8]' : ''}`} />
          </div>
        ))}
        <div className="ml-[3px] w-[233px] h-[34px] mt-[6px] pb-1 rounded-t-xl bg-[#cbdcf7] flex items-center pl-[9px] pr-2 text-[12px] text-[#1f2a3c]">
          <ConsoleFav />
          <span className="ml-2 flex-1 whitespace-nowrap">Prestaties</span>
          <X className="w-4 h-4" strokeWidth={2} />
        </div>
        <div className="ml-[10px] w-[18px] h-[34px] flex items-center justify-center self-start pt-[6px]">
          <Plus className="w-[18px] h-[18px]" strokeWidth={2} />
        </div>
        <div className="ml-auto flex">
          <span className="w-[46px] h-10 flex items-center justify-center"><Minus className="w-4 h-4" /></span>
          <span className="w-[46px] h-10 flex items-center justify-center"><Copy className="w-[14px] h-[14px]" /></span>
          <span className="w-[46px] h-10 flex items-center justify-center"><X className="w-[18px] h-[18px]" strokeWidth={1.5} /></span>
        </div>
      </div>

      <div className="h-10 shrink-0 flex items-end pl-1 bg-[#cbdcf7] text-[#1f2a3c]">
        <div className="h-[34px] w-9 flex items-center justify-center"><ArrowLeft className="w-[18px] h-[18px]" strokeWidth={2.2} /></div>
        <div className="h-[34px] w-9 flex items-center justify-center text-[#7288ac]"><ArrowRight className="w-[18px] h-[18px]" strokeWidth={2.2} /></div>
        <div className="h-[34px] w-9 flex items-center justify-center"><RotateCw className="w-4 h-4" strokeWidth={2.2} /></div>
        <div className="ml-2 w-[1625px] h-[34px] rounded-full bg-[#f2f7fe] flex items-center pl-[3px] pr-[14px]">
          <span className="w-7 h-7 rounded-full bg-[#cbdcf7] flex items-center justify-center"><SlidersHorizontal className="w-[14px] h-[14px]" /></span>
          <span className="ml-[6px] text-[13.95px] text-[#5d6776]"><span className="text-[#1f2a3c]">search.google.com</span>/search-console/performance/search-analytics?resource_id=https%3A%2F%2Fwww.rodebieten.eu%2F&amp;hl=nl&amp;num_of_months=16</span>
          <Star className="ml-auto w-[18px] h-[18px]" strokeWidth={2} />
        </div>
        <div className="ml-[9px] h-[34px] w-9 flex items-center justify-center"><Puzzle className="w-[18px] h-[18px]" strokeWidth={2.2} /></div>
        <div className="h-[34px] ml-[9px] flex items-center"><span className="w-px h-[18px] bg-[#8fb0e4]" /></div>
        <div className="ml-2 h-[34px] w-9 flex items-center justify-center"><span className="w-4 h-4 rounded-[2px] border-2 border-[#1f2a3c] bg-[linear-gradient(90deg,transparent_50%,#1f2a3c_50%)]" /></div>
        <div className="h-[34px] w-9 flex items-center justify-center"><Avatar size="w-5 h-5" /></div>
        <div className="h-[34px] w-9 flex items-center justify-center"><MoreVertical className="w-[18px] h-[18px]" strokeWidth={2.4} /></div>
      </div>

      <div className="h-[41px] shrink-0 flex items-center pl-[13px] pr-[14px] bg-[#cbdcf7] border-b border-[#a9b8cc] text-[12px] text-[#1f2a3c]">
        {bookmarks.map((b) => (
          <div key={b.label} className={`${b.w} shrink-0 flex items-center gap-[5px] whitespace-nowrap`}>
            {b.icon}
            <span>{b.label}</span>
          </div>
        ))}
        <ChevronsRight className="ml-auto w-4 h-4" strokeWidth={2.2} />
        <span className="ml-4 w-px h-[18px] bg-[#8fb0e4]" />
        <Folder className="ml-4 w-4 h-4 text-[#3c4043]" />
        <span className="ml-[9px] whitespace-nowrap">Alle bookmarks</span>
      </div>

      <div className="flex-1 min-h-0 flex">
        <Sidebar />
        <Main />
      </div>
      <Taskbar />
    </div>
  );
}
